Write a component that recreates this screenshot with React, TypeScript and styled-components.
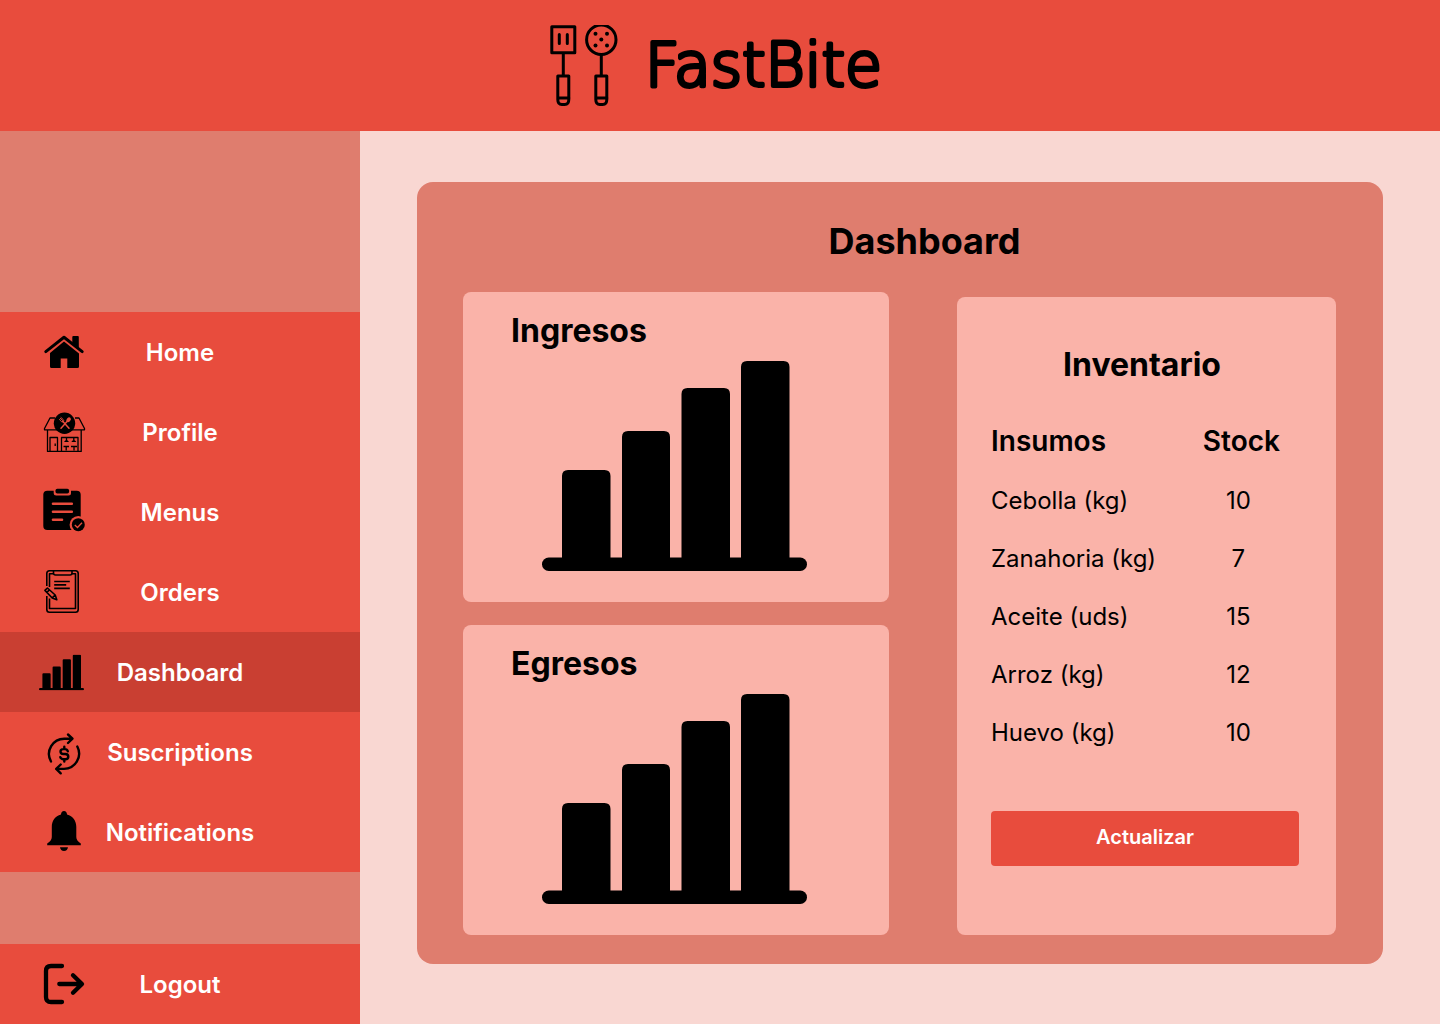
import React from "react";
import styled, { createGlobalStyle } from "styled-components";

const color = {
  brand: "#e84c3d",
  brandDark: "#c93f32",
  muted: "#df7d6e",
  panel: "#fab3a9",
  page: "#f9d7d2",
};

const GlobalStyle = createGlobalStyle`
  *, *::before, *::after { box-sizing: border-box; }
  body {
    margin: 0;
    background: ${color.page};
    color: #000;
    font-family: Inter, "Liberation Sans", sans-serif;
  }
`;

const Page = styled.div`
  min-height: 100vh;
  display: flex;
  flex-direction: column;
`;

const Header = styled.header`
  display: flex;
  align-items: center;
  justify-content: center;
  gap: 28px;
  height: 131px;
  padding-left: 32px;
  background: ${color.brand};
`;

const Body = styled.div`
  flex: 1;
  display: grid;
  grid-template-columns: 1fr 3fr;
`;

const Sidebar = styled.aside`
  display: flex;
  flex-direction: column;
  justify-content: space-between;
  padding-top: 181px;
  background: ${color.muted};
`;

const NavList = styled.nav`
  display: flex;
  flex-direction: column;
`;

const NavItem = styled.a<{ $active?: boolean }>`
  display: grid;
  align-items: center;
  height: 80px;
  background: ${(p) => (p.$active ? color.brandDark : color.brand)};
  color: #fff;
  font-size: 24px;
  font-weight: 600;
  line-height: 32px;
  text-decoration: none;

  > * {
    grid-area: 1 / 1;
  }
`;

const NavLabel = styled.span`
  justify-self: center;
  padding-top: 2px;
`;

const NavIcon = styled.svg`
  width: 48px;
  height: 48px;
  margin-left: 40px;
  color: #000;
`;

const Main = styled.main`
  padding: 51px 57px 60px;
`;

const Card = styled.section`
  padding: 37px 47px 29px 46px;
  border-radius: 16px;
  background: ${color.muted};
`;

const PageTitle = styled.h1`
  margin: 0 0 29px;
  padding-left: 50px;
  text-align: center;
  font-size: 36px;
  font-weight: 700;
  line-height: 44px;
`;

const Columns = styled.div`
  display: grid;
  grid-template-columns: 426fr 379fr;
  column-gap: 68px;
`;

const Charts = styled.div`
  display: flex;
  flex-direction: column;
  gap: 23px;
`;

const Panel = styled.section`
  display: flex;
  flex-direction: column;
  border-radius: 8px;
  background: ${color.panel};
`;

const ChartPanel = styled(Panel)`
  padding: 19px 52px 31px 48px;
  gap: 10px;
`;

const InventoryPanel = styled(Panel)`
  margin-top: 5px;
  padding: 48px 37px 48px 34px;
`;

const PanelTitle = styled.h2`
  margin: 0;
  font-size: 32px;
  font-weight: 700;
  line-height: 40px;
`;

const InventoryTitle = styled(PanelTitle)`
  padding-right: 6px;
  text-align: center;
`;

const ChartDrawing = styled.svg`
  align-self: center;
  width: 265px;
  height: 210px;
`;

const StockTable = styled.table`
  width: 100%;
  margin-top: 27px;
  border-collapse: collapse;
  table-layout: fixed;
  font-size: 24px;
  line-height: 32px;

  th,
  td {
    height: 58px;
    padding: 0;
    text-align: left;
    white-space: nowrap;
  }
  td {
    padding-top: 4px;
  }
  th {
    font-size: 28px;
    font-weight: 600;
  }
  th:last-child,
  td:last-child {
    width: 40%;
    text-align: center;
  }
  th:last-child {
    padding-left: 8px;
  }
  td:last-child {
    padding-left: 2px;
  }
`;

const UpdateButton = styled.button`
  height: 55px;
  margin-top: 51px;
  padding: 0 0 4px;
  border: 0;
  border-radius: 4px;
  background: ${color.brand};
  color: #fff;
  font: 600 20px/24px Inter, "Liberation Sans", sans-serif;
  cursor: pointer;
`;

const Wordmark = styled.svg`
  width: 276px;
  height: 100px;
  overflow: visible;

  text {
    font-family: "DejaVu Sans", sans-serif;
    font-size: 60px;
    font-weight: 200;
    fill: #000;
    stroke: #000;
    stroke-width: 4px;
    stroke-linejoin: round;
  }
`;

const Utensils = () => (
  <svg width="68" height="81" viewBox="10 10 68 81" fill="none" stroke="#000" strokeWidth="3" strokeLinejoin="round" strokeLinecap="round" aria-hidden="true">
    <path d="M11.800 11.800h23v26h-23zM19.300 19.500v9M27.300 19.500v9M23.300 38v22M17.800 61h11v23.500q0 5-4 5h-3q-4 0-4-5zM18 83h11" />
    <circle cx="61.300" cy="24.700" r="14.700" />
    <path d="M61.300 39.500V60M55.800 61h11v23.500q0 5-4 5h-3q-4 0-4-5zM56 83h11" />
    <g fill="#000" stroke="none">
      <circle cx="55.500" cy="18.700" r="2" />
      <circle cx="67" cy="18.700" r="2" />
      <circle cx="61.300" cy="24.500" r="2" />
      <circle cx="55.500" cy="30.500" r="2" />
      <circle cx="67" cy="30.500" r="2" />
    </g>
  </svg>
);

const HomeIcon = () => (
  <>
    <path d="M32.300 9q0-1 1-1h4.500q1 0 1 1v11l-6.500-5z" />
    <path d="M5.800 23.600 24 9.300l18.200 14.300" fill="none" stroke="currentColor" strokeWidth="3" strokeLinecap="round" strokeLinejoin="round" />
    <path d="M24 13.500 39 25.500V38.500q0 1.500-1.500 1.500H27.300V30.500h-6.600V40H11.500Q10 40 10 38.500V25z" />
  </>
);

const StoreIcon = () => (
  <>
    <g fill="none" stroke="currentColor" strokeWidth="1.300" strokeLinejoin="round">
      <path d="M15 10h-5L4.500 20.500v1.300h40v-1.300L39 10H35M7.500 22v21.400h33.700V22" />
      <path d="M10 43V29.500h7.500V43M21.500 43V29.500h16.500V43M15.200 35.500v2.500" />
      <path d="M26.500 29.500v3M33.800 29.500v3M23.500 38.500h5.500M31 38.500h6M26.200 38.500v4M34 38.500v4" />
    </g>
    <path d="M24 34q2.500-4 5 0zM31.300 34q2.500-4 5 0z" />
    <circle cx="24.500" cy="15.300" r="10.700" />
    <g fill="none" stroke={color.brand} strokeLinecap="round">
      <path d="m22.500 13 6.500 7.300M27.500 13 21 20.300" strokeWidth="1.500" />
      <path d="m19.500 11.300 1.700 2.200q1 1 2 0t0-2L21 9.500M20.300 10.300l2 2" strokeWidth=".9" />
    </g>
    <ellipse cx="28.600" cy="11.700" rx="1.900" ry="2.700" transform="rotate(40 28.600 11.700)" fill={color.brand} />
  </>
);

const MenuIcon = () => (
  <>
    <rect x="3.300" y="2.800" width="37.400" height="39.200" rx="4" />
    <rect x="13.700" y="-3" width="17.300" height="10.500" rx="2.500" fill={color.brand} />
    <rect x="15.500" y=".7" width="13.600" height="4.800" rx="1.800" />
    <path d="M13 15.700h18.800M13 23.700h18.800M13 31.700h9" stroke={color.brand} strokeWidth="2.600" strokeLinecap="round" />
    <circle cx="38.300" cy="36.700" r="8.700" fill={color.brand} />
    <circle cx="38.300" cy="36.700" r="6.500" />
    <path d="m34.800 37 2.700 2.500 4.500-4.800" fill="none" stroke={color.brand} strokeWidth="1.300" />
  </>
);

const OrderIcon = () => (
  <g fill="none" stroke="currentColor" strokeWidth="1.600" strokeLinejoin="round">
    <path d="M6.800 18V5.500q0-2.700 2.700-2.700h26q2.700 0 2.700 2.700v36q0 2.700-2.700 2.700h-26q-2.700 0-2.700-2.700V28" />
    <path d="M9.500 19V5.800h4M32 5.800h3.500V40.500h-26V30.500" />
    <path d="M13.500 3v2q0 2 2 2h14.500q2 0 2-2V3" />
    <path d="M14.200 13.500h15.600M14.200 16.900h12M14.200 20.400h15.600" />
    <path d="m4.900 22.400 2.500-2.400 7.800 7 1.600 4.800-4.600-1.800zM7 24.300l2.400-2.400M12.300 29.800l2.800-2.800" />
  </g>
);

const BarsShape = () => (
  <>
    <path d="M20 200V115q0-6 6-6h36.500q6 0 6 6v85zM80 200V76q0-6 6-6h36q6 0 6 6v124zM139.500 200V33q0-6 6-6h36.500q6 0 6 6v167zM199 200V6q0-6 6-6h36.500q6 0 6 6v194z" />
    <rect y="196.500" width="265" height="13.500" rx="6.750" />
  </>
);

const DashboardIcon = () => (
  <svg x="-1" y="6.500" width="45" height="36" viewBox="0 0 265 210">
    <BarsShape />
  </svg>
);

const SubscriptionIcon = () => (
  <g fill="none" stroke="currentColor" strokeWidth="2.400" strokeLinecap="round" strokeLinejoin="round">
    <path d="M11 33.500A15.300 15.300 0 0 1 24.500 10.700H32M28 6.500l4.500 4.200-4.500 4.300" />
    <path d="M37.300 18.500A15.300 15.300 0 0 1 24 40.900h-7.500M20.700 36.500l-4.500 4.400 4.500 4.400" />
    <path d="M27.800 23.300q-.6-2.200-3-2.200h-1.300q-3 0-3 2.400t3 2.500h1.800q3 .2 3 2.700t-3 2.500H23.500q-2.500 0-3.200-2M24.300 18.700v2.200M24.300 31.300v2.200" />
  </g>
);

const BellIcon = () => (
  <>
    <path d="M24 3q2.800 0 3 3.500C33 8 36.300 13 36.300 19v10q0 3.500 4.500 6.500v1.700H7.200v-1.700q4.600-3 4.600-6.500V19C11.800 13 15 8 21 6.500Q21.200 3 24 3z" />
    <path d="M20 39.300h8q-.5 3.700-4 3.700t-4-3.700z" />
  </>
);

const LogoutIcon = () => (
  <path d="M22 6H11q-5 0-5 5v26q0 5 5 5h11M19.300 24H41M33 15.200 42 24l-9 8.800" fill="none" stroke="currentColor" strokeWidth="4.300" strokeLinecap="round" strokeLinejoin="round" />
);

interface Entry {
  label: string;
  Icon: React.ComponentType;
}

const entries: Entry[] = [
  { label: "Home", Icon: HomeIcon },
  { label: "Profile", Icon: StoreIcon },
  { label: "Menus", Icon: MenuIcon },
  { label: "Orders", Icon: OrderIcon },
  { label: "Dashboard", Icon: DashboardIcon },
  { label: "Suscriptions", Icon: SubscriptionIcon },
  { label: "Notifications", Icon: BellIcon },
];

const stock: [string, number][] = [
  ["Cebolla (kg)", 10],
  ["Zanahoria (kg)", 7],
  ["Aceite (uds)", 15],
  ["Arroz (kg)", 12],
  ["Huevo (kg)", 10],
];

const NavLink = ({ label, Icon, active }: Entry & { active?: boolean }) => (
  <NavItem href={`#${label.toLowerCase()}`} $active={active} aria-current={active ? "page" : undefined}>
    <NavIcon viewBox="0 0 48 48" fill="currentColor" overflow="visible" aria-hidden="true">
      <Icon />
    </NavIcon>
    <NavLabel>{label}</NavLabel>
  </NavItem>
);

const BarChart = ({ title }: { title: string }) => (
  <ChartPanel>
    <PanelTitle>{title}</PanelTitle>
    <ChartDrawing viewBox="0 0 265 210" role="img" aria-label={title}>
      <BarsShape />
    </ChartDrawing>
  </ChartPanel>
);

export default function App() {
  return (
    <Page>
      <GlobalStyle />
      <Header>
        <Utensils />
        <Wordmark viewBox="0 0 276 100">
          <text x="-1" y="70">FastBite</text>
        </Wordmark>
      </Header>
      <Body>
        <Sidebar>
          <NavList>
            {entries.map((e) => (
              <NavLink key={e.label} {...e} active={e.label === "Dashboard"} />
            ))}
          </NavList>
          <NavLink label="Logout" Icon={LogoutIcon} />
        </Sidebar>
        <Main>
          <Card>
            <PageTitle>Dashboard</PageTitle>
            <Columns>
              <Charts>
                <BarChart title="Ingresos" />
                <BarChart title="Egresos" />
              </Charts>
              <InventoryPanel>
                <InventoryTitle>Inventario</InventoryTitle>
                <StockTable>
                  <thead>
                    <tr>
                      <th scope="col">Insumos</th>
                      <th scope="col">Stock</th>
                    </tr>
                  </thead>
                  <tbody>
                    {stock.map(([name, amount]) => (
                      <tr key={name}>
                        <td>{name}</td>
                        <td>{amount}</td>
                      </tr>
                    ))}
                  </tbody>
                </StockTable>
                <UpdateButton type="button">Actualizar</UpdateButton>
              </InventoryPanel>
            </Columns>
          </Card>
        </Main>
      </Body>
    </Page>
  );
}
